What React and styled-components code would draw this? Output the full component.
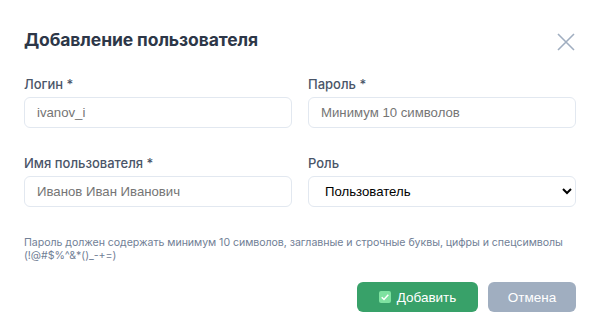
import React from 'react'
import styled, { createGlobalStyle } from 'styled-components'

const GlobalStyle = createGlobalStyle`
  body {
    margin: 0;
    background: #ffffff;
    font-family: Inter, "Noto Sans", sans-serif;
  }
`

export default function App() {
    return (
        <Modal>
            <GlobalStyle />
            <Header>
                <Title>Добавление пользователя</Title>
                <CloseButton aria-label="Закрыть">
                    <svg width="18" height="18" viewBox="0 0 18 18">
                        <path d="M1 1 L17 17 M17 1 L1 17" stroke="#a0aec0" strokeWidth="1.6" fill="none" />
                    </svg>
                </CloseButton>
            </Header>

            <Grid>
                <Field>
                    <Label>Логин *</Label>
                    <Input placeholder="ivanov_i" />
                </Field>
                <Field>
                    <Label>Пароль *</Label>
                    <Input type="password" placeholder="Минимум 10 символов" />
                </Field>
                <Field>
                    <Label>Имя пользователя *</Label>
                    <Input placeholder="Иванов Иван Иванович" />
                </Field>
                <Field>
                    <Label>Роль</Label>
                    <Select defaultValue="user">
                        <option value="user">Пользователь</option>
                        <option value="admin">Администратор</option>
                    </Select>
                </Field>
            </Grid>

            <Hint>
                Пароль должен содержать минимум 10 символов, заглавные и строчные буквы, цифры и спецсимволы (!@#$%^&amp;*()_-+=)
            </Hint>

            <Footer>
                <Button variant="primary">
                    <svg width="12" height="12" viewBox="0 0 12 12">
                        <rect width="12" height="12" rx="2" fill="#7ee2a0" />
                        <path d="M2.7 6.3 L5 8.5 L9.3 3.8" stroke="#ffffff" strokeWidth="1.5" fill="none" />
                    </svg>
                    Добавить
                </Button>
                <Button variant="secondary">Отмена</Button>
            </Footer>
        </Modal>
    )
}

const Modal = styled.div`
    box-sizing: border-box;
    width: 600px;
    padding: 29px 24px 24px;
`

const Header = styled.div`
    display: flex;
    align-items: center;
    justify-content: space-between;
    height: 22px;
    margin-bottom: 25px;
`

const Title = styled.h2`
    margin: 0;
    font-size: 17.5px;
    line-height: 22px;
    font-weight: 700;
    letter-spacing: -0.1px;
    color: #2d3748;
`

const CloseButton = styled.button`
    display: flex;
    padding: 0;
    margin-right: 1px;
    margin-top: 3px;
    border: none;
    background: none;
    cursor: pointer;
`

const Grid = styled.div`
    display: grid;
    grid-template-columns: 1fr 1fr;
    column-gap: 16px;
    row-gap: 27px;
`

const Field = styled.div`
    display: flex;
    flex-direction: column;
`

const Label = styled.label`
    font-size: 13px;
    line-height: 16px;
    font-weight: 500;
    color: #4a5568;
    margin-bottom: 5px;
`

const Input = styled.input`
    box-sizing: border-box;
    height: 31px;
    padding: 0 12px;
    border: 1px solid #e2e8f0;
    border-radius: 6px;
    font-family: "Liberation Sans", Arial, sans-serif;
    font-size: 13.2px;
    color: #2d3748;
    outline: none;

    &::placeholder {
        color: #757575;
    }
`

const Select = styled.select`
    box-sizing: border-box;
    height: 31px;
    padding: 0 8px 0 12px;
    border: 1px solid #e2e8f0;
    border-radius: 6px;
    background: #ffffff;
    font-family: "Liberation Sans", Arial, sans-serif;
    font-size: 13.2px;
    color: #000000;
    outline: none;
`

const Hint = styled.p`
    margin: 29px 0 0;
    font-size: 10.6px;
    line-height: 13px;
    letter-spacing: -0.05px;
    color: #718096;
`

const Footer = styled.div`
    display: flex;
    justify-content: flex-end;
    gap: 10px;
    margin-top: 20px;
`

const Button = styled.button`
    display: flex;
    align-items: center;
    justify-content: center;
    gap: 6px;
    height: 30px;
    width: ${p => (p.variant === 'primary' ? '121px' : '88px')};
    border: none;
    border-radius: 6px;
    background: ${p => (p.variant === 'primary' ? '#38a169' : '#a0aec0')};
    color: #ffffff;
    font-family: "Liberation Sans", Arial, sans-serif;
    font-size: 13.5px;
    font-weight: 500;
    cursor: pointer;
`
